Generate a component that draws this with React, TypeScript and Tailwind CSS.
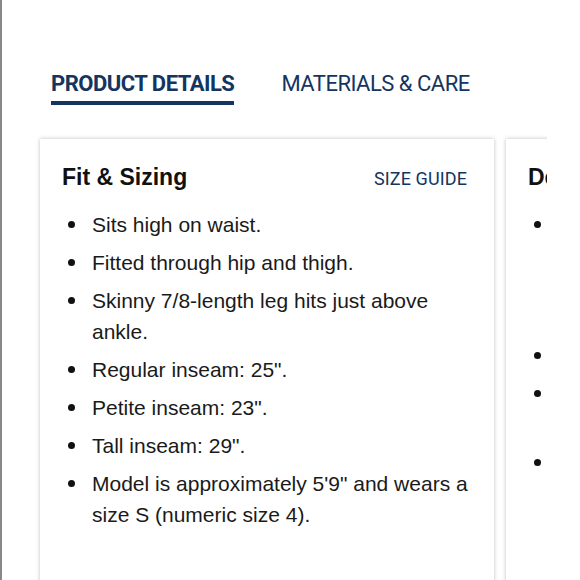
const fit = [
  "Sits high on waist.",
  "Fitted through hip and thigh.",
  "Skinny 7/8-length leg hits just above ankle.",
  'Regular inseam: 25".',
  'Petite inseam: 23".',
  'Tall inseam: 29".',
  'Model is approximately 5\'9" and wears a size S (numeric size 4).',
];

const details = [
  "Made from our signature stretch denim with a soft, broken-in feel that moves with you and holds its shape from the first wear to the last, all day long.",
  "Zip fly.",
  "Classic five-pocket styling with tonal stitching.",
  "Imported.",
];

function Card({ title, items, guide }: { title: string; items: string[]; guide?: boolean }) {
  return (
    <div className="w-[454px] shrink-0 bg-white pt-[24px] pl-[22px] pr-[16px] shadow-[0_0_4px_rgba(0,0,0,0.25)] min-h-[460px]">
      <div className="flex items-baseline justify-between pr-[11px]">
        <h2 className="text-[23px] leading-[28px] font-bold text-[#111]">{title}</h2>
        {guide && (
          <a
            className="text-[18px] leading-[20px] text-[#13355f] tracking-[0.1px]"
            style={{ fontFamily: "Roboto, sans-serif" }}
          >
            SIZE GUIDE
          </a>
        )}
      </div>
      <ul className="mt-[18px] flex flex-col gap-[7px]">
        {items.map((t) => (
          <li key={t} className="flex text-[21px] leading-[31px] text-[#1a1a1a]">
            <span className="w-[30px] shrink-0 pl-[6px] flex items-center h-[31px]">
              <span className="block h-[7px] w-[7px] rounded-full bg-[#111]" />
            </span>
            <span>{t}</span>
          </li>
        ))}
      </ul>
    </div>
  );
}

export default function App() {
  return (
    <div
      className="h-[580px] w-[580px] overflow-hidden border-l-2 border-[#888] bg-white"
      style={{ fontFamily: '"Liberation Sans", Arial, sans-serif' }}
    >
      <div
        className="flex gap-[47px] pl-[49px] pt-[71px] text-[22px] leading-[26px] text-[#13355f] tracking-[-0.5px]"
        style={{ fontFamily: "Roboto, sans-serif" }}
      >
        <div className="border-b-4 border-[#13355f] pb-[4px] font-bold">PRODUCT DETAILS</div>
        <div className="pb-[4px]">MATERIALS &amp; CARE</div>
      </div>
      <div className="mt-[30px] w-[545px] overflow-hidden pl-[38px]">
        <div className="flex gap-[12px] pt-[4px]">
          <Card title="Fit & Sizing" items={fit} guide />
          <Card title="Details" items={details} />
        </div>
      </div>
    </div>
  );
}
